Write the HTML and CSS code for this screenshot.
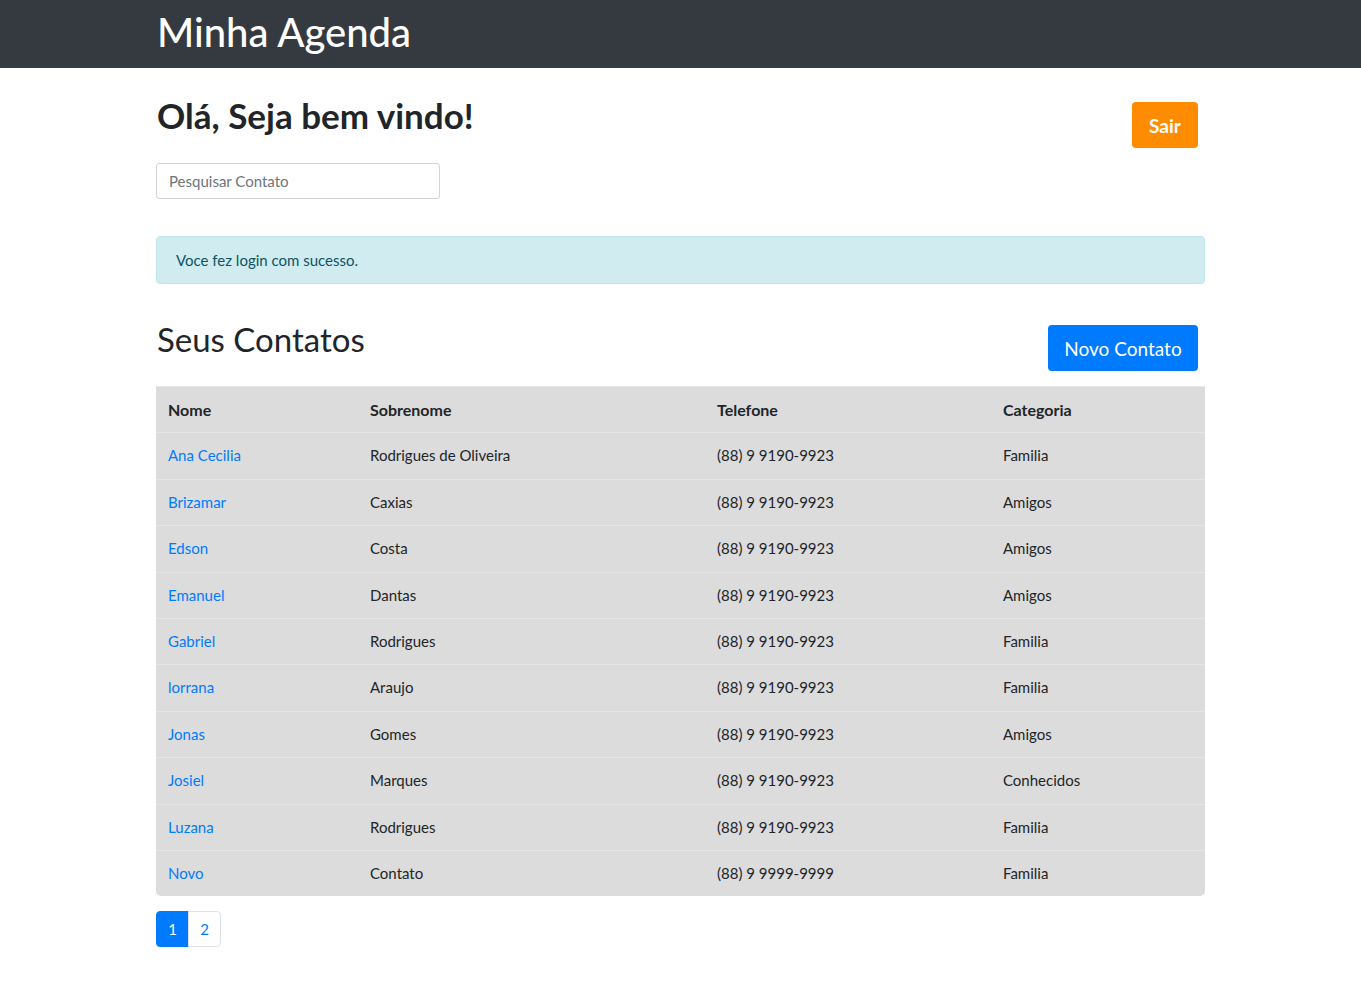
FILE: index.html
```html
<!DOCTYPE html>
<html lang="pt-BR">
<head>
<meta charset="utf-8">
<title>Minha Agenda</title>
<link rel="stylesheet" href="styles.css">
</head>
<body>
<nav class="navbar">
  <div class="container">
    <a class="brand" href="#">Minha Agenda</a>
  </div>
</nav>
<main class="container">
  <div class="welcome-row">
    <div class="welcome-left">
      <h1 class="welcome">Olá, Seja bem vindo!</h1>
      <input class="search" type="text" placeholder="Pesquisar Contato">
    </div>
    <a class="btn btn-orange" href="#">Sair</a>
  </div>
  <div class="alert">Voce fez login com sucesso.</div>
  <div class="contacts-head">
    <h2 class="contacts-title">Seus Contatos</h2>
    <a class="btn btn-blue" href="#">Novo Contato</a>
  </div>
  <div class="table-wrap">
    <table class="table">
      <colgroup>
        <col class="c1"><col class="c2"><col class="c3"><col class="c4">
      </colgroup>
      <thead>
        <tr><th>Nome</th><th>Sobrenome</th><th>Telefone</th><th>Categoria</th></tr>
      </thead>
      <tbody>
        <tr><td><a href="#">Ana Cecilia</a></td><td>Rodrigues de Oliveira</td><td>(88) 9 9190-9923</td><td>Familia</td></tr>
        <tr><td><a href="#">Brizamar</a></td><td>Caxias</td><td>(88) 9 9190-9923</td><td>Amigos</td></tr>
        <tr><td><a href="#">Edson</a></td><td>Costa</td><td>(88) 9 9190-9923</td><td>Amigos</td></tr>
        <tr><td><a href="#">Emanuel</a></td><td>Dantas</td><td>(88) 9 9190-9923</td><td>Amigos</td></tr>
        <tr><td><a href="#">Gabriel</a></td><td>Rodrigues</td><td>(88) 9 9190-9923</td><td>Familia</td></tr>
        <tr><td><a href="#">lorrana</a></td><td>Araujo</td><td>(88) 9 9190-9923</td><td>Familia</td></tr>
        <tr><td><a href="#">Jonas</a></td><td>Gomes</td><td>(88) 9 9190-9923</td><td>Amigos</td></tr>
        <tr><td><a href="#">Josiel</a></td><td>Marques</td><td>(88) 9 9190-9923</td><td>Conhecidos</td></tr>
        <tr><td><a href="#">Luzana</a></td><td>Rodrigues</td><td>(88) 9 9190-9923</td><td>Familia</td></tr>
        <tr><td><a href="#">Novo</a></td><td>Contato</td><td>(88) 9 9999-9999</td><td>Familia</td></tr>
      </tbody>
    </table>
  </div>
  <ul class="pagination">
    <li><a class="page active" href="#">1</a></li>
    <li><a class="page" href="#">2</a></li>
  </ul>
</main>
</body>
</html>
```
FILE: styles.css
```css
* { box-sizing: border-box; }
html, body { margin: 0; padding: 0; }
body {
  font-family: "Lato", "Noto Sans", sans-serif;
  font-size: 15px;
  color: #212529;
  background: #fff;
}
a { text-decoration: none; }
.container {
  width: 1049px;
  margin: 0 auto;
}
.navbar {
  background: #343a40;
  height: 68px;
}
.navbar .container { padding-left: 1px; }
.brand {
  display: block;
  color: #fff;
  font-size: 40px;
  line-height: 64px;
  font-weight: 500;
}
.welcome-row {
  display: flex;
  justify-content: space-between;
  align-items: flex-start;
  padding-top: 26px;
}
.welcome-left { display: flex; flex-direction: column; }
.welcome {
  margin: -2px 0 0 1px;
  font-size: 35px;
  font-weight: 700;
  line-height: 46px;
}
.search {
  margin-top: 25px;
  width: 284px;
  height: 36px;
  border: 1px solid #ced4da;
  border-radius: 3px;
  padding: 0 12px;
  font-family: inherit;
  font-size: 15px;
  color: #495057;
}
.search::placeholder { color: #6c757d; }
.btn {
  display: inline-flex;
  align-items: center;
  justify-content: center;
  height: 46px;
  border-radius: 4px;
  color: #fff;
  font-size: 19px;
  margin-right: 7px;
}
.btn-orange {
  margin-top: 8px;
  width: 66px;
  background: #ff8c00;
  font-weight: 700;
}
.btn-blue {
  width: 150px;
  background: #007bff;
}
.alert {
  margin-top: 37px;
  height: 48px;
  background: #d1ecf1;
  border: 1px solid #bee5eb;
  border-radius: 4px;
  color: #0c5460;
  padding: 0 19px;
  display: flex;
  align-items: center;
}
.contacts-head {
  margin-top: 41px;
  display: flex;
  justify-content: space-between;
  align-items: flex-start;
}
.contacts-title {
  margin: -1px 0 0 1px;
  font-size: 33px;
  font-weight: 400;
  line-height: 30px;
}
.table-wrap {
  margin-top: 15px;
  border-top: 1px solid #e6e8eb;
}
.table {
  width: 100%;
  border-collapse: separate;
  border-spacing: 0;
  background: #dcdcdc;
  border-radius: 0 0 5px 5px;
  table-layout: fixed;
}
.table thead th:first-child { border-top-left-radius: 5px; }
.table thead th:last-child { border-top-right-radius: 5px; }
.c1 { width: 202px; }
.c2 { width: 347px; }
.c3 { width: 286px; }
.c4 { width: 214px; }
.table th, .table td {
  text-align: left;
  padding: 12px 12px;
  line-height: 21.4px;
  border-bottom: 1px solid #e3e5e8;
}
.table tbody tr:last-child td { border-bottom: none; }
.table th { font-weight: 700; font-size: 16px; }
.table td a { color: #007bff; }
.pagination {
  list-style: none;
  padding: 0;
  margin: 15px 0 0;
  display: flex;
}
.page {
  display: flex;
  align-items: center;
  justify-content: center;
  height: 36px;
  width: 33px;
  color: #007bff;
  border: 1px solid #dee2e6;
  margin-left: -1px;
}
.pagination li:first-child .page {
  margin-left: 0;
  border-radius: 4px 0 0 4px;
}
.pagination li:last-child .page { border-radius: 0 4px 4px 0; }
.page.active {
  background: #007bff;
  border-color: #007bff;
  color: #fff;
}
```
